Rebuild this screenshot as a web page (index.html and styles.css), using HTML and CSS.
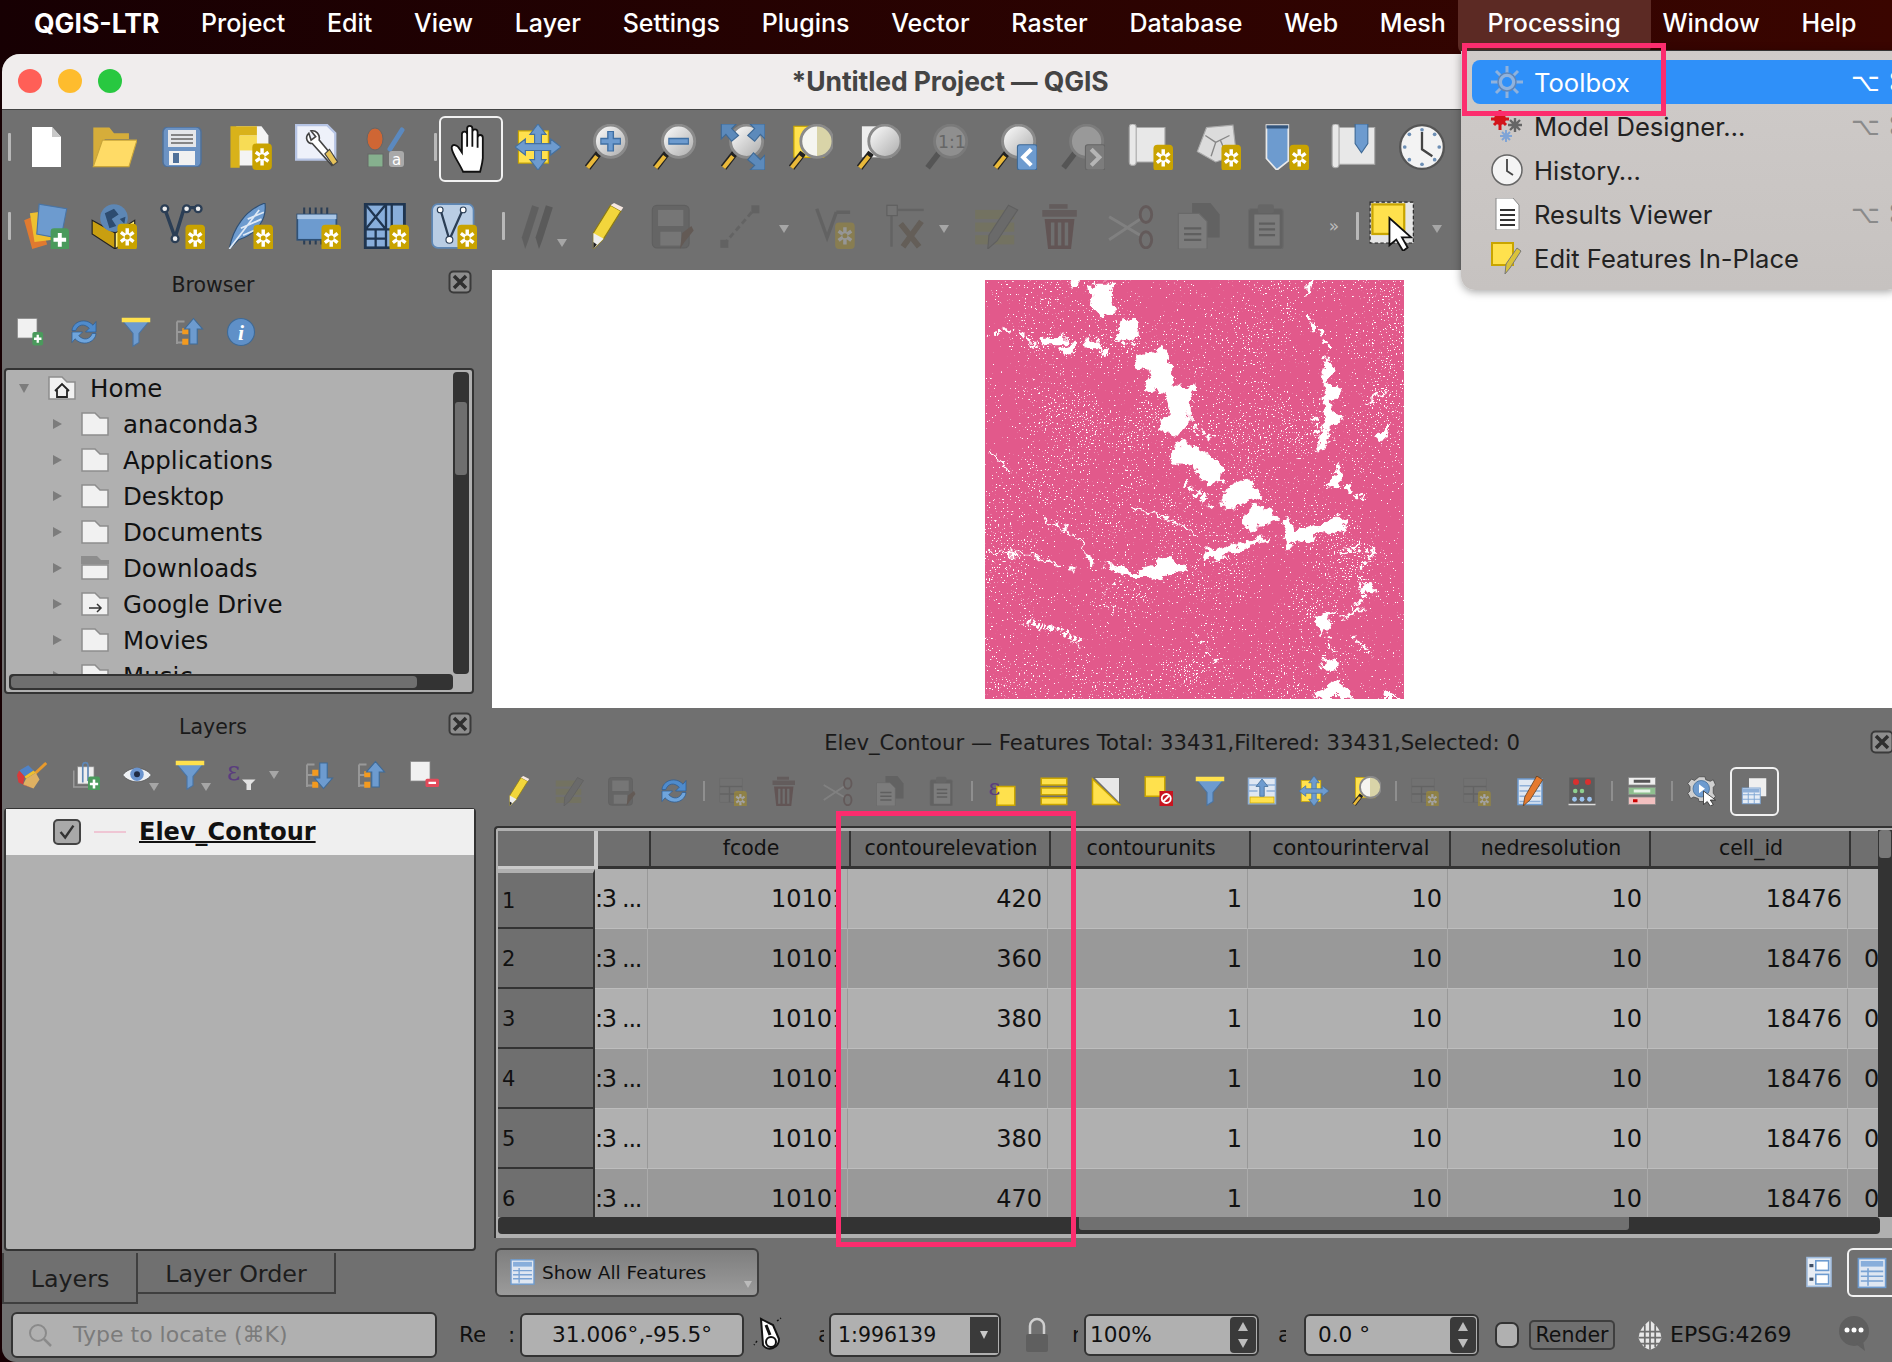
FILE: index.html
```html
<!DOCTYPE html>
<html lang="en">
<head>
<meta charset="utf-8">
<title>QGIS</title>
<link rel="stylesheet" href="styles.css">
</head>
<body>
<svg class="sprite" xmlns="http://www.w3.org/2000/svg">
<defs>
<linearGradient id="glass" x1="0" y1="0" x2="1" y2="1"><stop offset="0" stop-color="#fff"/><stop offset="1" stop-color="#aaa"/></linearGradient>
<linearGradient id="glassy" x1="0" y1="0" x2="1" y2="0"><stop offset=".5" stop-color="#f5f5f0"/><stop offset=".5" stop-color="#d9d4a8"/></linearGradient>
<filter id="speck" x="0" y="0" width="100%" height="100%"><feTurbulence type="fractalNoise" baseFrequency="0.22" numOctaves="2" seed="7" result="h"/><feTurbulence type="fractalNoise" baseFrequency="0.005" numOctaves="2" seed="11" result="l"/><feComposite in="h" in2="l" operator="arithmetic" k1="0" k2=".82" k3=".18" k4="0" result="s"/><feColorMatrix in="s" values="0 0 0 0 1  0 0 0 0 1  0 0 0 0 1  0 0 0 22 -14.6"/></filter>
<filter id="rough" x="-5%" y="-5%" width="110%" height="110%"><feTurbulence type="fractalNoise" baseFrequency="0.035" numOctaves="4" seed="4" result="n"/><feDisplacementMap in="SourceGraphic" in2="n" scale="46" xChannelSelector="R" yChannelSelector="G"/></filter>
<g id="star"><rect width="17" height="23" rx="3.5" fill="#c9a300"/><path d="M8.5 4V19M3 7.5L14 15.5M14 7.5L3 15.5" stroke="#fff" stroke-width="3"/><circle cx="8.5" cy="11.5" r="2.2" fill="#c9a300"/></g>
<g id="gplus"><rect width="16" height="20" rx="3" fill="#4a9a5c"/><path d="M8 4V16M2.5 10H13.5" stroke="#fff" stroke-width="3.4"/></g>
<g id="lens"><path d="M14 25L4 38" stroke="#222" stroke-width="6"/><path d="M12 28L4 38" stroke="#eab93a" stroke-width="3.6"/><circle cx="24" cy="15" r="14" fill="url(#glass)" stroke="#8a8a8a" stroke-width="2.5"/></g>
<g id="arrows4" fill="#6d9bcf" stroke="#45719f" stroke-width="1"><path d="M20 0L27 9H23V31H27L20 40L13 31H17V9H13Z"/><path d="M0 20L9 13V17H31V13L40 20L31 27V23H9V27Z"/></g>
<symbol id="new" viewBox="0 0 40 40"><path d="M6 0H26L35 10V40H6Z" fill="#fff"/><path d="M26 0L35 10H26Z" fill="#c8c8c8"/></symbol>
<symbol id="open" viewBox="0 0 40 40"><path d="M2 3H16L20 8H33V13H12L6 36H2Z" fill="#d6ad3a"/><path d="M10 14H40L33 37H2Z" fill="#ffdb66" stroke="#c9a53a"/></symbol>
<symbol id="save" viewBox="0 0 40 40"><rect x="1" y="0" width="38" height="40" rx="5" fill="#6c93c4" stroke="#4f7099" stroke-width="1.5"/><rect x="6" y="3" width="28" height="17" fill="#e4e6ea"/><path d="M9 8H31M9 12H31M9 16H31" stroke="#666" stroke-width="1.6"/><rect x="7" y="24" width="26" height="14" fill="#f1f1f1"/><rect x="11" y="26" width="6" height="10" fill="#4f7099"/></symbol>
<symbol id="props" viewBox="0 0 40 40"><path d="M8 2H30L36 10V36H8Z" fill="#f4f4f4"/><path d="M3 2H26V10H11V38H3Z" fill="#d9b21a"/><rect x="11" y="10" width="15" height="13" fill="#f7dc55"/><use href="#star" x="22" y="17"/></symbol>
<symbol id="wrench" viewBox="0 0 40 40"><path d="M1 1H28L35 8V31H1Z" fill="#eef1fa" stroke="#b6c4e4" stroke-width="2"/><path d="M12 8C8 12 11 17 15 17L32 36L36 32L21 14C22 9 18 5 14 6L18 11L14 14Z" fill="#fff" stroke="#444" stroke-width="1.4"/><path d="M26 26L33 36L37 33L30 22Z" fill="#e7c35a" stroke="#444"/></symbol>
<symbol id="style" viewBox="0 0 40 40"><ellipse cx="9" cy="12" rx="8" ry="11" fill="#cf6634" stroke="#666"/><path d="M24 22L36 3" stroke="#5b89bf" stroke-width="5" stroke-linecap="round"/><rect x="2" y="27" width="15" height="13" fill="#86b08e" stroke="#666"/><rect x="23" y="24" width="15" height="16" rx="3" fill="#a9a9a9"/><text x="26" y="38" font-family="DejaVu Sans" font-size="15" fill="#fff">a</text></symbol>
<symbol id="hand" viewBox="0 0 40 44"><path d="M13 42C9 33 3 26 3 21C3 17 8 18 10 22L12 25V9a2.3 2.3 0 0 1 4.6 0V20V4a2.3 2.3 0 0 1 4.6 0V20V7a2.3 2.3 0 0 1 4.6 0V21V12a2.3 2.3 0 0 1 4.6 0V30C30 35 29 38 28 42Z" fill="#fff" stroke="#111" stroke-width="1.6"/></symbol>
<symbol id="pansel" viewBox="0 0 40 40"><rect x="3" y="6" width="26" height="28" fill="#ffe14d" stroke="#c9a500"/><use href="#arrows4"/></symbol>
<symbol id="zin" viewBox="0 0 40 40"><use href="#lens"/><path d="M24 6V24M15 15H33" stroke="#3f6fa3" stroke-width="6"/><path d="M24 7V23M16 15H32" stroke="#6d9bcf" stroke-width="3.6"/></symbol>
<symbol id="zout" viewBox="0 0 40 40"><use href="#lens"/><path d="M15 15H33" stroke="#3f6fa3" stroke-width="6"/><path d="M16 15H32" stroke="#6d9bcf" stroke-width="3.6"/></symbol>
<symbol id="zfull" viewBox="0 0 40 40"><use href="#lens"/><g fill="#5c8abb" stroke="#3f6a96"><path d="M2 0H15L11 4L17 10L11 15L6 9L2 13Z"/><path d="M40 0V13L36 9L31 15L25 10L31 4L27 0Z"/><path d="M40 40H27L31 36L25 31L30 25L36 31L40 27Z"/></g></symbol>
<symbol id="zsel" viewBox="0 0 40 40"><rect x="6" y="2" width="26" height="27" fill="#ffe14d" stroke="#c9a500"/><path d="M14 25L4 38" stroke="#222" stroke-width="6"/><path d="M12 28L4 38" stroke="#eab93a" stroke-width="3.6"/><circle cx="26" cy="15" r="14" fill="url(#glassy)" stroke="#8a8a8a" stroke-width="2.5"/></symbol>
<symbol id="zlayer" viewBox="0 0 40 40"><rect x="6" y="2" width="26" height="27" fill="#eee"/><path d="M14 25L4 38" stroke="#222" stroke-width="6"/><path d="M12 28L4 38" stroke="#eab93a" stroke-width="3.6"/><circle cx="26" cy="15" r="14" fill="url(#glass)" stroke="#8a8a8a" stroke-width="2.5"/></symbol>
<symbol id="znative" viewBox="0 0 40 40"><path d="M14 25L4 38" stroke="#555" stroke-width="5"/><circle cx="24" cy="15" r="14" fill="#8f8f8f" stroke="#7a7a7a" stroke-width="2.5"/><text x="13" y="21" font-family="DejaVu Sans" font-size="15" fill="#666">1:1</text></symbol>
<symbol id="zlast" viewBox="0 0 40 40"><use href="#lens"/><rect x="23" y="18" width="17" height="22" rx="2" fill="#6d9bcf" stroke="#3f6a96"/><path d="M35 22L28 29L35 36" fill="none" stroke="#fff" stroke-width="3.6"/></symbol>
<symbol id="znext" viewBox="0 0 40 40"><path d="M14 25L4 38" stroke="#555" stroke-width="5"/><circle cx="24" cy="15" r="14" fill="#999" stroke="#7c7c7c" stroke-width="2.5"/><rect x="23" y="18" width="17" height="22" rx="2" fill="#7c7c7c" stroke="#666"/><path d="M28 22L35 29L28 36" fill="none" stroke="#b5b5b5" stroke-width="3.6"/></symbol>
<symbol id="mapview" viewBox="0 0 40 40"><path d="M2 3a3 3 0 0 1 6 0V33H33V3H8V33a3 3 0 1 1-6 0Z" fill="#e8e8e8" stroke="#aaa"/><use href="#star" x="23" y="18"/></symbol>
<symbol id="map3d" viewBox="0 0 40 40"><path d="M2 24L10 3L33 1L36 27L18 33Z" fill="#dcdcdc" stroke="#aaa"/><path d="M9 10L18 16L14 28M18 16L30 10M22 14L28 28" fill="none" stroke="#888" stroke-width="1.2"/><use href="#star" x="23" y="18"/></symbol>
<symbol id="bmnew" viewBox="0 0 40 40"><path d="M3 1H22V32L12 40L3 30Z" fill="#6d9bcf" stroke="#e9e9e9" stroke-width="1.5"/><path d="M3 1H22V4H3Z" fill="#33557c"/><use href="#star" x="23" y="18"/></symbol>
<symbol id="bms" viewBox="0 0 40 40"><path d="M1 3a3 3 0 0 1 6 0V35H38V3H7V35a3 3 0 1 1-6 0Z" fill="#e8e8e8" stroke="#aaa"/><path d="M21 0H32V17L26.500 25L21 17Z" fill="#6d9bcf" stroke="#3f6a96"/></symbol>
<symbol id="clock" viewBox="0 0 40 40"><circle cx="20" cy="20" r="19" fill="#f3f3f3" stroke="#555" stroke-width="2"/><path d="M20 7V22L29 28" fill="none" stroke="#444" stroke-width="2"/><g fill="#6d8fb5"><circle cx="20" cy="5" r="1.600"/><circle cx="20" cy="35" r="1.600"/><circle cx="5" cy="20" r="1.600"/><circle cx="35" cy="20" r="1.600"/><circle cx="9" cy="9" r="1.600"/><circle cx="31" cy="9" r="1.600"/><circle cx="9" cy="31" r="1.600"/><circle cx="31" cy="31" r="1.600"/></g></symbol>
<symbol id="layernew" viewBox="0 0 40 40"><path d="M1 15L13 10L21 36L8 40Z" fill="#e07a30"/><path d="M6 9L20 7L26 32L10 34Z" fill="#eec02f"/><path d="M14 1L38 5L33 31L12 27Z" fill="#6d9bcf" stroke="#4a74a3"/><use href="#gplus" x="24" y="22"/></symbol>
<symbol id="gpkg" viewBox="0 0 40 40"><path d="M1 15L21 26V40L1 27Z" fill="#c99f10" stroke="#222"/><path d="M21 26L38 15V28L21 40Z" fill="#fff080" stroke="#222"/><circle cx="20" cy="13" r="12" fill="#5d87b5"/><path d="M12 9L20 5L24 10L18 14L22 20L16 22ZM25 14L30 12L29 18Z" fill="#2d4c70"/><use href="#star" x="23" y="18"/></symbol>
<symbol id="vnew" viewBox="0 0 40 40"><path d="M5 5L14 30L22 4M22 4H34" fill="none" stroke="#2b3e55" stroke-width="3"/><g fill="#eee" stroke="#2b3e55" stroke-width="2"><circle cx="5" cy="5" r="3"/><circle cx="14" cy="31" r="3"/><circle cx="24" cy="5" r="3"/><circle cx="34" cy="5" r="3"/></g><use href="#star" x="23" y="19"/></symbol>
<symbol id="feather" viewBox="0 0 40 40"><path d="M2 40C5 22 16 6 33 0C35 14 26 27 10 32Z" fill="#6d9bcf" stroke="#2f5075"/><path d="M2 40L28 6M14 28L28 22M12 22L30 14M18 14L32 8" stroke="#dfe9f5" stroke-width="1.5"/><use href="#star" x="23" y="19"/></symbol>
<symbol id="chip" viewBox="0 0 40 40"><path d="M8 4V36M13 4V36M18 4V36M23 4V36M28 4V36" stroke="#2b3e55" stroke-width="1.800"/><rect x="2" y="10" width="34" height="22" fill="#6d9bcf" stroke="#2f5075" stroke-width="1.500"/><rect x="2" y="10" width="34" height="4" fill="#a9c6e6"/><use href="#star" x="23" y="19"/></symbol>
<symbol id="mesh" viewBox="0 0 40 40"><rect x="2" y="1" width="34" height="38" fill="#88aedb" stroke="#1f3550" stroke-width="2.500"/><path d="M2 23H36M20 1V39M2 31H20M11 23V39M2 1L20 23M20 1L2 23M25 1V23" stroke="#1f3550" stroke-width="2"/><use href="#star" x="23" y="19"/></symbol>
<symbol id="virt" viewBox="0 0 40 40"><rect x="1" y="1" width="36" height="38" rx="5" fill="#b9cde4" stroke="#5e87b5" stroke-width="1.500"/><path d="M8 5L16 32L28 5" fill="none" stroke="#2b3e55" stroke-width="2"/><g fill="#fff" stroke="#2b3e55"><circle cx="8" cy="6" r="2.500"/><circle cx="16" cy="32" r="3"/><circle cx="28" cy="6" r="2.500"/></g><use href="#star" x="23" y="19"/></symbol>
<symbol id="pens" viewBox="0 0 40 40"><path d="M8 40L5 30L14 2L20 4L11 32Z" fill="#555"/><path d="M20 40L17 30L26 2L32 4L23 32Z" fill="#4c4c4c"/></symbol>
<symbol id="pencil" viewBox="0 0 40 40"><path d="M9 40L9 26L24 2L33 7L18 31Z" fill="#f2d63c" stroke="#8c7b12"/><path d="M24 2L27 0L35 4L33 7Z" fill="#f6e8e0"/><path d="M9 40L9 26L18 31Z" fill="#eee"/><path d="M9 40V34L12 36Z" fill="#222"/></symbol>
<symbol id="saveedit" viewBox="0 0 40 40"><rect x="2" y="2" width="32" height="37" rx="4" fill="#5e5e5e" stroke="#555"/><rect x="7" y="6" width="22" height="14" fill="#7b7b7b"/><rect x="9" y="25" width="18" height="12" fill="#7b7b7b"/><path d="M26 40L28 26L36 20L38 24L30 34Z" fill="#5c4c44"/></symbol>
<symbol id="dline" viewBox="0 0 40 40"><path d="M5 36L32 5" stroke="#5c5c5c" stroke-width="2.500" stroke-dasharray="5 3"/><rect x="2" y="32" width="7" height="7" fill="#595959"/><rect x="29" y="2" width="7" height="7" fill="#595959"/></symbol>
<symbol id="vertex" viewBox="0 0 40 40"><path d="M5 5L14 30L22 8M22 8H34" fill="none" stroke="#5a5a5a" stroke-width="3"/><use href="#star" x="21" y="17" opacity=".45"/></symbol>
<symbol id="tools" viewBox="0 0 40 40"><path d="M10 5V38" stroke="#5a5a5a" stroke-width="2"/><rect x="6" y="2" width="9" height="9" fill="#777" stroke="#555"/><path d="M15 6H38" stroke="#5a5a5a" stroke-width="2"/><path d="M20 38L36 16M34 38L18 18" stroke="#5c5248" stroke-width="5"/></symbol>
<symbol id="tabpen" viewBox="0 0 40 40"><rect x="1" y="6" width="34" height="8" fill="#767458"/><rect x="1" y="17" width="34" height="8" fill="#767458"/><rect x="1" y="28" width="34" height="8" fill="#767458"/><path d="M12 40L13 28L30 2L38 6L20 33Z" fill="#676767" stroke="#555"/></symbol>
<symbol id="trash" viewBox="0 0 40 40"><path d="M2 6H32V12H2Z" fill="#5c4f4f"/><path d="M8 1H24V5H8Z" fill="#5c4f4f"/><path d="M4 14H30L27 40H7Z" fill="#5a4444"/><path d="M11 17V37M17 17V37M23 17V37" stroke="#6f6f6f" stroke-width="3"/></symbol>
<symbol id="scis" viewBox="0 0 40 40"><path d="M1 12L28 28M1 32L28 14" stroke="#8c8c8c" stroke-width="2.500"/><ellipse cx="33" cy="10" rx="5" ry="7" fill="none" stroke="#5c4c4c" stroke-width="2.500"/><ellipse cx="33" cy="32" rx="5" ry="7" fill="none" stroke="#5c4c4c" stroke-width="2.500"/></symbol>
<symbol id="copy" viewBox="0 0 40 40"><path d="M14 0H30L38 10V30H14Z" fill="#595959"/><path d="M2 9H20L27 16V40H2Z" fill="#858585" stroke="#666"/><path d="M7 22H22M7 27H22M7 32H22" stroke="#555" stroke-width="2"/></symbol>
<symbol id="paste" viewBox="0 0 40 40"><rect x="4" y="5" width="30" height="35" rx="2" fill="#595959" stroke="#666"/><rect x="9" y="10" width="22" height="27" fill="#858585"/><rect x="12" y="1" width="14" height="8" rx="2" fill="#606060"/><path d="M13 18H27M13 23H27M13 28H27" stroke="#555" stroke-width="2"/></symbol>
<symbol id="selfeat" viewBox="0 0 44 44"><rect x="1" y="1" width="38" height="36" fill="#e6e6e6" stroke="#222" stroke-dasharray="3 2"/><rect x="3" y="3" width="28" height="26" fill="#ffe14d" stroke="#c9a500" stroke-width="2"/><path d="M18 15V39L24 34L30 44L34 41L29 32H37Z" fill="#fff" stroke="#111" stroke-width="1.600"/></symbol>
<symbol id="addwhite" viewBox="0 0 40 40"><rect x="2" y="2" width="26" height="26" fill="#f1f1f1" stroke="#888"/><use href="#gplus" x="22" y="20" transform="translate(2 2) scale(.9)"/></symbol>
<symbol id="remwhite" viewBox="0 0 40 40"><rect x="2" y="2" width="26" height="26" fill="#f1f1f1" stroke="#888"/><rect x="22" y="25" width="18" height="11" rx="2" fill="#e24a5a"/><rect x="26" y="29" width="10" height="3" fill="#fff"/></symbol>
<symbol id="refresh" viewBox="0 0 40 40"><path d="M4 18C5 6 22 0 32 11L36 6V20H22L27 15C20 8 12 10 9 18Z" fill="#4f8bcc" stroke="#2c5e96"/><path d="M36 22C35 34 18 40 8 29L4 34V20H18L13 25C20 32 28 30 31 22Z" fill="#6fa5dc" stroke="#2c5e96"/></symbol>
<symbol id="filter" viewBox="0 0 40 40"><path d="M2 5L16 22V39L24 34V22L38 5Z" fill="#6d9bcf" stroke="#4a74a3" stroke-width="1.500"/><rect x="1" y="1" width="38" height="6" fill="#ffe14d"/></symbol>
<symbol id="collapse" viewBox="0 0 40 40"><path d="M4 6V36M4 6H14M4 20H14M4 34H14" fill="none" stroke="#999" stroke-width="2.500"/><rect x="11" y="15" width="8" height="8" fill="#f39a1f"/><rect x="11" y="29" width="8" height="8" fill="#f39a1f"/><path d="M26 2L38 16H31V36H21V16H14Z" fill="#6d9bcf" stroke="#3f6a96" stroke-width="1.500"/></symbol>
<symbol id="expand" viewBox="0 0 40 40"><path d="M4 6V36M4 6H14M4 20H14M4 34H14" fill="none" stroke="#999" stroke-width="2.500"/><rect x="11" y="13" width="8" height="8" fill="#f39a1f"/><rect x="11" y="29" width="8" height="8" fill="#f39a1f"/><path d="M26 38L38 24H31V4H21V24H14Z" fill="#6d9bcf" stroke="#3f6a96" stroke-width="1.500"/></symbol>
<symbol id="info" viewBox="0 0 40 40"><circle cx="20" cy="20" r="18" fill="#5f90c8" stroke="#3f6a96" stroke-width="1.500"/><text x="20" y="30" text-anchor="middle" font-family="Liberation Serif" font-style="italic" font-weight="700" font-size="29" fill="#fff">i</text></symbol>
<symbol id="brush" viewBox="0 0 40 40"><path d="M24 18L39 4" stroke="#e89a2c" stroke-width="4"/><path d="M3 14L15 7L22 14L10 22Z" fill="#4f82c6"/><path d="M10 22L22 14L25 17L12 25Z" fill="#eec02f"/><path d="M12 25L25 17L30 26L22 38L8 33Z" fill="#dfb162"/><path d="M3 14L10 22L8 33L22 38L2 30L0 20Z" fill="#d83a3a"/></symbol>
<symbol id="group" viewBox="0 0 40 40"><path d="M5 14V36H24" fill="none" stroke="#9a9a9a" stroke-width="2"/><rect x="10" y="9" width="22" height="23" fill="#eee" stroke="#888"/><path d="M17 30V7a3 3 0 0 1 7 0V28" fill="none" stroke="#5e87b5" stroke-width="2.200"/><use href="#gplus" x="24" y="22"/></symbol>
<symbol id="eye" viewBox="0 0 40 40"><path d="M1 20C10 8 30 8 39 20C30 32 10 32 1 20Z" fill="#eef1f5" stroke="#555"/><circle cx="20" cy="19" r="9" fill="#6a94cf"/><circle cx="20" cy="19" r="4" fill="#1f2b44"/></symbol>
<symbol id="eps" viewBox="0 0 40 40"><text x="0" y="26" font-family="DejaVu Serif" font-size="34" fill="#5a3d7e">ε</text><path d="M20 26H38L32 32V40H26V32Z" fill="#e2e2e2"/></symbol>
<symbol id="tabnew" viewBox="0 0 40 40"><rect x="1" y="3" width="30" height="32" fill="#737373" stroke="#666"/><path d="M1 14H31M1 24H31M14 14V35" stroke="#5c5c5c" stroke-width="2"/><use href="#star" x="20" y="20" opacity=".6"/></symbol>
<symbol id="epssel" viewBox="0 0 40 40"><rect x="13" y="14" width="24" height="25" fill="#ffe14d" stroke="#c9a500" stroke-width="2"/><text x="2" y="25" font-family="DejaVu Serif" font-size="30" fill="#5a3d7e">ε</text></symbol>
<symbol id="selall" viewBox="0 0 40 40"><rect x="3" y="3" width="34" height="9" fill="#ffe14d" stroke="#c9a500" stroke-width="2"/><rect x="3" y="16" width="34" height="9" fill="#ffe14d" stroke="#c9a500" stroke-width="2"/><rect x="3" y="29" width="34" height="9" fill="#ffe14d" stroke="#c9a500" stroke-width="2"/></symbol>
<symbol id="invert" viewBox="0 0 40 40"><path d="M2 4L38 38H2Z" fill="#ffe14d" stroke="#c9a500" stroke-width="2"/><path d="M4 2H38V36Z" fill="#e8e8e8" stroke="#555"/></symbol>
<symbol id="desel" viewBox="0 0 40 40"><rect x="3" y="1" width="26" height="26" fill="#ffe14d" stroke="#c9a500" stroke-width="2"/><rect x="22" y="20" width="18" height="20" fill="#c8141f"/><circle cx="31" cy="30" r="6" fill="none" stroke="#fff" stroke-width="2.500"/><path d="M27 34L35 26" stroke="#fff" stroke-width="2.500"/></symbol>
<symbol id="movesel" viewBox="0 0 40 40"><rect x="2" y="3" width="36" height="34" fill="#dfe7f2" stroke="#8fb0d8" stroke-width="2"/><path d="M2 12H38M2 20H14M26 20H38" stroke="#8fb0d8" stroke-width="2"/><rect x="4" y="28" width="32" height="8" fill="#ffe14d" stroke="#c9a500"/><path d="M20 4L28 14H23V27H17V14H12Z" fill="#6d9bcf" stroke="#3f6a96"/></symbol>
<symbol id="calc" viewBox="0 0 40 40"><rect x="4" y="4" width="32" height="34" fill="#dfe7f2" stroke="#6d9bcf" stroke-width="2"/><path d="M6 13H34M6 20H34M6 27H34M6 34H34" stroke="#8fb0d8" stroke-width="2"/><path d="M11 40L13 28L29 0L37 5L20 32Z" fill="#e57a2e" stroke="#5c3a1a"/></symbol>
<symbol id="abacus" viewBox="0 0 40 40"><rect x="3" y="2" width="34" height="36" fill="#5c5c5c"/><path d="M2 38H38" stroke="#ddd" stroke-width="2"/><g fill="#d9302f"><circle cx="12" cy="8" r="4"/><circle cx="28" cy="8" r="4"/></g><g fill="#8fd08f"><circle cx="11" cy="20" r="3"/><circle cx="20" cy="20" r="3"/></g><g fill="#9cc3ee"><circle cx="10" cy="31" r="3.200"/><circle cx="20" cy="31" r="3.200"/><circle cx="30" cy="31" r="3.200"/></g></symbol>
<symbol id="cond" viewBox="0 0 40 40"><rect x="2" y="2" width="36" height="10" fill="#eee" stroke="#888"/><rect x="9" y="5" width="22" height="4" fill="#555"/><rect x="2" y="15" width="36" height="10" fill="#8fbf8f" stroke="#888"/><rect x="9" y="18" width="22" height="4" fill="#e8f3e8"/><rect x="2" y="28" width="36" height="10" fill="#f2c0c0" stroke="#888"/><rect x="8" y="31" width="6" height="4" fill="#c00"/></symbol>
<symbol id="gear" viewBox="0 0 40 40"><path d="M16 1H24L25 5L31 7L35 5L38 12L35 15V23L38 27L33 33L29 31L24 34H16L15 30L9 28L5 30L1 23L4 20V14L1 10L6 4L10 6Z" fill="#cfcfcf" stroke="#444"/><circle cx="19" cy="17" r="11" fill="#6d9bcf" stroke="#3f6a96"/><path d="M16 11L24 17L16 23Z" fill="#fff"/><path d="M22 20V38L27 34L31 40L35 38L31 32H38Z" fill="#fff" stroke="#222"/></symbol>
<symbol id="dock" viewBox="0 0 40 40"><rect x="12" y="3" width="23" height="24" fill="#efefef"/><rect x="3" y="16" width="24" height="21" fill="#e6edf6" stroke="#7aa3d3" stroke-width="1.200"/><path d="M3 25H27M3 31H27M11 22V37M19 22V37" stroke="#7aa3d3" stroke-width="1.200"/><rect x="4" y="17" width="22" height="5" fill="#8fb0d8"/></symbol>
<symbol id="tabview" viewBox="0 0 40 40"><rect x="3" y="2" width="34" height="36" fill="#dfe7f2" stroke="#6d9bcf" stroke-width="2"/><rect x="6" y="5" width="28" height="7" fill="#88aedb"/><path d="M6 18H34M6 24H34M6 30H34M15 14V36" stroke="#7aa3d3" stroke-width="2"/></symbol>
<symbol id="formview" viewBox="0 0 40 40"><rect x="5" y="2" width="30" height="36" fill="#e8edf4" stroke="#9fbbdd" stroke-width="2"/><rect x="16" y="6" width="16" height="12" fill="#fff" stroke="#6d9bcf" stroke-width="2"/><rect x="16" y="23" width="16" height="12" fill="#fff" stroke="#6d9bcf" stroke-width="2"/><rect x="8" y="10" width="5" height="4" fill="#3f4f66"/><rect x="8" y="27" width="5" height="4" fill="#3f4f66"/></symbol>
<symbol id="folder" viewBox="0 0 28 24"><path d="M1 1H14L19 6H27V23H1Z" fill="#f1f1f1" stroke="#8d8d8d" stroke-width="1.500"/></symbol>
<symbol id="folderdl" viewBox="0 0 28 24"><path d="M1 9H27V23H1Z" fill="#f1f1f1" stroke="#8d8d8d" stroke-width="1.500"/><path d="M0 0H16L20 4H28V8H0Z" fill="#8d8d8d"/></symbol>
<symbol id="folderln" viewBox="0 0 28 24"><path d="M1 1H14L19 6H27V23H1Z" fill="#f1f1f1" stroke="#8d8d8d" stroke-width="1.500"/><path d="M8 16H20M16 12L20 16L16 20" fill="none" stroke="#333" stroke-width="1.500"/></symbol>
<symbol id="home" viewBox="0 0 28 24"><path d="M1 1H14L19 6H27V23H1Z" fill="#f1f1f1" stroke="#8d8d8d" stroke-width="1.500"/><path d="M7 15L14 8L21 15M9 14V21H19V14" fill="none" stroke="#222" stroke-width="1.800"/></symbol>
<symbol id="close" viewBox="0 0 24 24"><rect x="1.500" y="1.500" width="21" height="21" rx="4" fill="#8d8d8d" stroke="#3a3a3a" stroke-width="2"/><path d="M6 6L18 18M18 6L6 18" stroke="#2f2f2f" stroke-width="3.500"/></symbol>
<symbol id="search" viewBox="0 0 24 24"><circle cx="10" cy="10" r="8" fill="none" stroke="#8a8a8a" stroke-width="2"/><path d="M16 16L23 23" stroke="#8a8a8a" stroke-width="2.500"/></symbol>
<symbol id="mouse" viewBox="0 0 32 36"><path d="M8 2L20 8L26 22C26 31 15 35 10 28Z" fill="#fff" stroke="#111" stroke-width="2"/><circle cx="18" cy="25" r="5" fill="#fff" stroke="#111" stroke-width="2"/><path d="M13 8L17 18" stroke="#111" stroke-width="3"/><path d="M24 4L28 1M4 24L1 28" stroke="#111" stroke-width="1.500" stroke-dasharray="2 2"/></symbol>
<symbol id="lock" viewBox="0 0 24 36"><path d="M5 18V9a7 7 0 0 1 14 0V18" fill="none" stroke="#cfcfcf" stroke-width="2.500"/><rect x="1" y="17" width="22" height="18" rx="2" fill="#5f5f5f"/></symbol>
<symbol id="globe" viewBox="0 0 30 36"><path d="M15 1C6 8 2 14 2 22C5 30 10 34 15 35C20 34 25 30 28 22C28 14 24 8 15 1Z" fill="#e8e8e8"/><path d="M2 14H28M2 21H28M4 28H26M9 6V32M15 1V35M21 6V32" stroke="#6f6f6f" stroke-width="2"/></symbol>
<symbol id="bubble" viewBox="0 0 32 40"><circle cx="16" cy="16" r="15" fill="#5f5f5f"/><path d="M18 29L27 36L25 26Z" fill="#5f5f5f"/><circle cx="9" cy="15" r="2.500" fill="#fff"/><circle cx="16" cy="15" r="2.500" fill="#fff"/><circle cx="23" cy="15" r="2.500" fill="#fff"/></symbol>
<symbol id="m-gear" viewBox="0 0 32 32"><path d="M16 0V32M0 16H32M5 5L27 27M27 5L5 27" stroke="#8fb2dd" stroke-width="3"/><circle cx="16" cy="16" r="9" fill="#8fb2dd" stroke="#5f86b8" stroke-width="1.500"/><circle cx="16" cy="16" r="5" fill="#2f90f9"/></symbol>
<symbol id="m-model" viewBox="0 0 32 32"><path d="M9 0V20M0 9H18M3 3L15 15M15 3L3 15" stroke="#d3131a" stroke-width="3"/><circle cx="9" cy="9" r="6" fill="#d3131a"/><path d="M24 8V22M17 15H31M19 10L29 20M29 10L19 20" stroke="#666" stroke-width="2.400"/><circle cx="24" cy="15" r="3.500" fill="#666"/><path d="M15 20V32M9 26H21M11 22L19 30M19 22L11 30" stroke="#7fa4d6" stroke-width="2"/></symbol>
<symbol id="m-clock" viewBox="0 0 32 32"><circle cx="16" cy="16" r="15" fill="#f4f4f4" stroke="#666" stroke-width="1.500"/><path d="M16 5V17L22 21" fill="none" stroke="#444" stroke-width="1.800"/></symbol>
<symbol id="m-doc" viewBox="0 0 32 32"><path d="M5 0H22L28 7V32H5Z" fill="#fff" stroke="#888"/><path d="M9 12H24M9 17H24M9 22H24M9 27H24" stroke="#333" stroke-width="1.800"/></symbol>
<symbol id="m-edit" viewBox="0 0 32 32"><rect x="1" y="1" width="21" height="22" fill="#ffe14d" stroke="#c9a500" stroke-width="2"/><path d="M14 32L15 22L26 6L30 9L19 26Z" fill="#d9c23a" stroke="#777"/></symbol>
</defs>
</svg>

<header class="menubar">
  <span class="mi mi-app">QGIS-LTR</span><span class="mi">Project</span><span class="mi">Edit</span><span class="mi">View</span><span class="mi">Layer</span><span class="mi">Settings</span><span class="mi">Plugins</span><span class="mi">Vector</span><span class="mi">Raster</span><span class="mi">Database</span><span class="mi">Web</span><span class="mi">Mesh</span><span class="mi mi-open">Processing</span><span class="mi">Window</span><span class="mi">Help</span>
</header>

<div class="window">
  <div class="titlebar">
    <div class="lights"><i class="light red"></i><i class="light yellow"></i><i class="light green"></i></div>
    <span class="title">*Untitled Project — QGIS</span>
  </div>

  <div class="toolbars">
    <div class="tbrow">
      <i class="handle"></i>
      <span class="tb"><svg class="ic ic40"><use href="#new"/></svg></span>
      <span class="tb"><svg class="ic"><use href="#open"/></svg></span>
      <span class="tb"><svg class="ic ic40"><use href="#save"/></svg></span>
      <span class="tb"><svg class="ic"><use href="#props"/></svg></span>
      <span class="tb"><svg class="ic"><use href="#wrench"/></svg></span>
      <span class="tb"><svg class="ic ic40"><use href="#style"/></svg></span>
      <i class="handle hsep"></i>
      <span class="tb tb-on"><svg class="ic ic-hand"><use href="#hand"/></svg></span>
      <span class="tb"><svg class="ic"><use href="#pansel"/></svg></span>
      <span class="tb"><svg class="ic"><use href="#zin"/></svg></span>
      <span class="tb"><svg class="ic"><use href="#zout"/></svg></span>
      <span class="tb"><svg class="ic"><use href="#zfull"/></svg></span>
      <span class="tb"><svg class="ic"><use href="#zsel"/></svg></span>
      <span class="tb"><svg class="ic"><use href="#zlayer"/></svg></span>
      <span class="tb"><svg class="ic"><use href="#znative"/></svg></span>
      <span class="tb"><svg class="ic"><use href="#zlast"/></svg></span>
      <span class="tb"><svg class="ic"><use href="#znext"/></svg></span>
      <span class="tb"><svg class="ic"><use href="#mapview"/></svg></span>
      <span class="tb"><svg class="ic"><use href="#map3d"/></svg></span>
      <span class="tb"><svg class="ic"><use href="#bmnew"/></svg></span>
      <span class="tb"><svg class="ic"><use href="#bms"/></svg></span>
      <span class="tb"><svg class="ic"><use href="#clock"/></svg></span>
    </div>
    <div class="tbrow">
      <i class="handle"></i>
      <span class="tb"><svg class="ic"><use href="#layernew"/></svg></span>
      <span class="tb"><svg class="ic"><use href="#gpkg"/></svg></span>
      <span class="tb"><svg class="ic"><use href="#vnew"/></svg></span>
      <span class="tb"><svg class="ic"><use href="#feather"/></svg></span>
      <span class="tb"><svg class="ic"><use href="#chip"/></svg></span>
      <span class="tb"><svg class="ic"><use href="#mesh"/></svg></span>
      <span class="tb"><svg class="ic"><use href="#virt"/></svg></span>
      <i class="handle hsep"></i>
      <span class="tb tb-dd"><svg class="ic off"><use href="#pens"/></svg></span>
      <span class="tb tb-nudge1"><svg class="ic"><use href="#pencil"/></svg></span>
      <span class="tb tb-nudge1"><svg class="ic off"><use href="#saveedit"/></svg></span>
      <span class="tb"><svg class="ic off"><use href="#dline"/></svg></span>
      <i class="dd dd-a"></i>
      <span class="tb"><svg class="ic off"><use href="#vertex"/></svg></span>
      <span class="tb tb-nudge1b"><svg class="ic off"><use href="#tools"/></svg></span>
      <i class="dd dd-b"></i>
      <span class="tb tb-nudge9"><svg class="ic off"><use href="#tabpen"/></svg></span>
      <span class="tb tb-nudge2"><svg class="ic off"><use href="#trash"/></svg></span>
      <span class="tb"><svg class="ic off"><use href="#scis"/></svg></span>
      <span class="tb"><svg class="ic off"><use href="#copy"/></svg></span>
      <span class="tb"><svg class="ic off"><use href="#paste"/></svg></span>
      <span class="more">»</span>
      <i class="handle hsep2"></i>
      <span class="tb"><svg class="ic ic-sel"><use href="#selfeat"/></svg></span>
      <i class="dd dd-c"></i>
    </div>
  </div>

  <div class="workspace">
    <aside class="leftdock">
      <div class="docktitle"><span>Browser</span><svg class="closebtn"><use href="#close"/></svg></div>
      <div class="ptools">
        <span class="pt"><svg class="is"><use href="#addwhite"/></svg></span>
        <span class="pt"><svg class="is"><use href="#refresh"/></svg></span>
        <span class="pt"><svg class="is"><use href="#filter"/></svg></span>
        <span class="pt"><svg class="is"><use href="#collapse"/></svg></span>
        <span class="pt"><svg class="is"><use href="#info"/></svg></span>
      </div>
      <div class="tree">
        <div class="tree-area">
          <div class="tree-list">
            <div class="node"><i class="tri tri-down"></i><svg class="fico"><use href="#home"/></svg><span>Home</span></div>
            <div class="node child"><i class="tri"></i><svg class="fico"><use href="#folder"/></svg><span>anaconda3</span></div>
            <div class="node child"><i class="tri"></i><svg class="fico"><use href="#folder"/></svg><span>Applications</span></div>
            <div class="node child"><i class="tri"></i><svg class="fico"><use href="#folder"/></svg><span>Desktop</span></div>
            <div class="node child"><i class="tri"></i><svg class="fico"><use href="#folder"/></svg><span>Documents</span></div>
            <div class="node child"><i class="tri"></i><svg class="fico"><use href="#folderdl"/></svg><span>Downloads</span></div>
            <div class="node child"><i class="tri"></i><svg class="fico"><use href="#folderln"/></svg><span>Google Drive</span></div>
            <div class="node child"><i class="tri"></i><svg class="fico"><use href="#folder"/></svg><span>Movies</span></div>
            <div class="node child"><i class="tri"></i><svg class="fico"><use href="#folder"/></svg><span>Music</span></div>
          </div>
          <div class="tree-v"><i class="tree-vthumb"></i></div>
        </div>
        <div class="tree-h"><i class="tree-hthumb"></i></div>
      </div>
      <div class="docktitle docktitle-2"><span>Layers</span><svg class="closebtn"><use href="#close"/></svg></div>
      <div class="ptools ptools-2">
        <span class="pt"><svg class="is"><use href="#brush"/></svg></span>
        <span class="pt"><svg class="is"><use href="#group"/></svg></span>
        <span class="pt pt-dd"><svg class="is"><use href="#eye"/></svg></span>
        <span class="pt pt-dd"><svg class="is"><use href="#filter"/></svg></span>
        <span class="pt"><svg class="is"><use href="#eps"/></svg></span>
        <i class="dd dd-eps"></i>
        <span class="pt"><svg class="is"><use href="#expand"/></svg></span>
        <span class="pt"><svg class="is"><use href="#collapse"/></svg></span>
        <span class="pt"><svg class="is"><use href="#remwhite"/></svg></span>
      </div>
      <div class="layerlist">
        <div class="layerrow">
          <span class="check"><svg viewBox="0 0 24 24" class="checkmark"><path d="M5 12L10 18L19 5" fill="none" stroke="#333" stroke-width="2.600"/></svg></span>
          <i class="symline"></i>
          <span class="layername">Elev_Contour</span>
        </div>
      </div>
      <div class="tabs"><span class="tab tab-on">Layers</span><span class="tab">Layer Order</span></div>
    </aside>

    <main class="rightarea">
      <div class="canvas">
        <svg class="mapsvg" viewBox="75 57 1258 1258" xmlns="http://www.w3.org/2000/svg">
          <rect x="75" y="57" width="1258" height="1258" fill="#e2598b"/>
          <rect x="75" y="57" width="1258" height="1258" filter="url(#speck)"/>
          <g filter="url(#rough)">
            <g fill="#fff">
              <circle cx="349" cy="67" r="14"/>
              <path d="M385 90L410 65L470 65L450 100L470 150L430 172L400 150Z"/>
              <path d="M485 170L525 180L535 220L510 255L470 230Z"/>
              <path d="M240 235L330 228L320 250L250 250Z"/><path d="M300 265L345 250L345 280L320 285Z"/><path d="M370 228L420 240L415 270L375 272Z"/><path d="M420 268L445 270L440 285L418 280Z"/>
              <path d="M535 280L610 258L640 320L640 370L705 378L690 420L690 480L655 522L590 505L630 460L610 400L550 382L580 340L535 320Z"/>
              <path d="M630 590L660 540L720 562L780 600L795 660L740 668L700 610L650 612Z"/>
              <path d="M790 690L870 650L905 710L850 730L800 750Z"/>
              <path d="M840 770L890 730L965 775L900 800L860 810Z"/>
              <path d="M968 820L985 758L1005 808L1100 785L1170 765L1150 810L1060 830L990 858Z"/>
              <path d="M800 860L940 823L930 840L860 860L810 880L730 905L740 855L760 870Z"/>
              <path d="M430 908L470 912L520 938L580 910L635 885L680 930L620 945L570 955L510 955L470 935Z"/>
              <path d="M1100 680L1135 600L1148 672Z"/>
              <path d="M1100 285L1130 330L1100 365L1145 390L1110 430L1140 480L1100 510L1115 540L1080 570L1075 545L1095 500L1095 440L1095 370L1085 340Z"/>
              <path d="M1060 1075L1130 1045L1100 1110L1085 1120Z"/><path d="M1140 1075L1225 1035L1190 1062L1145 1078Z"/>
              <path d="M1090 1190L1140 1210L1130 1240L1085 1225Z"/><path d="M1060 1310L1140 1255L1190 1315Z"/><path d="M1270 1295L1333 1315H1265Z"/>
              <path d="M1195 990L1240 950L1250 995Z"/><path d="M1240 525L1300 490L1260 545Z"/><path d="M1040 60H1060L1040 115Z"/><path d="M330 925L345 920L335 940Z"/><path d="M380 890L400 895L395 920Z"/>
            </g>
            <g fill="none" stroke="#fff" stroke-width="5">
              <path d="M250 770L300 795L345 822L380 880L395 915"/>
              <path d="M85 870L135 880L220 882L290 915"/><path d="M90 575L150 630"/><path d="M510 735L640 780L715 830"/><path d="M1210 440L1280 390"/>
              <path d="M200 1085L300 1110L360 1150" stroke-width="14" stroke-dasharray="10 8"/>
              <path d="M180 215L240 270M90 220L160 210" stroke-width="10" stroke-dasharray="12 9"/>
              <path d="M1040 170L1110 250L1100 290M1060 470L1090 540M1160 680L1210 720" stroke-width="14" stroke-dasharray="16 12"/>
              <path d="M700 1120L790 1220L835 1285" stroke-dasharray="10 24"/>
              <path d="M700 500L760 540M670 660L760 740" stroke-width="16" stroke-dasharray="14 11"/>
              <path d="M1150 880L1190 860L1240 880L1200 930" stroke-width="16" stroke-dasharray="9 9"/>
              <path d="M1190 950L1215 1010L1180 1050M1100 1130L1130 1180M1180 1130L1240 1190" stroke-width="10" stroke-dasharray="11 10"/>
              <path d="M480 960L420 1000M430 1030L470 1050" stroke-width="8" stroke-dasharray="9 9"/>
            </g>
          </g>
        </svg>
      </div>
      <div class="attrtitle"><span>Elev_Contour — Features Total: 33431,Filtered: 33431,Selected: 0</span><svg class="closebtn closebtn-r"><use href="#close"/></svg></div>
      <div class="attrtools">
        <span class="at"><svg class="is"><use href="#pencil"/></svg></span>
        <span class="at"><svg class="is off"><use href="#tabpen"/></svg></span>
        <span class="at"><svg class="is off"><use href="#saveedit"/></svg></span>
        <span class="at"><svg class="is"><use href="#refresh"/></svg></span>
        <i class="asep"></i>
        <span class="at"><svg class="is off"><use href="#tabnew"/></svg></span>
        <span class="at"><svg class="is off"><use href="#trash"/></svg></span>
        <span class="at"><svg class="is off"><use href="#scis"/></svg></span>
        <span class="at"><svg class="is off"><use href="#copy"/></svg></span>
        <span class="at"><svg class="is off"><use href="#paste"/></svg></span>
        <i class="asep"></i>
        <span class="at"><svg class="is"><use href="#epssel"/></svg></span>
        <span class="at"><svg class="is"><use href="#selall"/></svg></span>
        <span class="at"><svg class="is"><use href="#invert"/></svg></span>
        <span class="at"><svg class="is"><use href="#desel"/></svg></span>
        <span class="at"><svg class="is"><use href="#filter"/></svg></span>
        <span class="at"><svg class="is"><use href="#movesel"/></svg></span>
        <span class="at"><svg class="is"><use href="#pansel"/></svg></span>
        <span class="at"><svg class="is"><use href="#zsel"/></svg></span>
        <i class="asep"></i>
        <span class="at"><svg class="is off"><use href="#tabnew"/></svg></span>
        <span class="at"><svg class="is off"><use href="#tabnew"/></svg></span>
        <span class="at"><svg class="is"><use href="#calc"/></svg></span>
        <span class="at"><svg class="is"><use href="#abacus"/></svg></span>
        <i class="asep"></i>
        <span class="at"><svg class="is"><use href="#cond"/></svg></span>
        <i class="asep"></i>
        <span class="at"><svg class="is"><use href="#gear"/></svg></span>
        <span class="at at-on"><svg class="is"><use href="#dock"/></svg></span>
      </div>
      <div class="table">
        <div class="table-top">
          <div class="table-main">
            <div class="thead">
              <span class="corner"></span><span class="th th-0"></span><span class="th">fcode</span><span class="th">contourelevation</span><span class="th">contourunits</span><span class="th">contourinterval</span><span class="th">nedresolution</span><span class="th">cell_id</span><span class="th th-last"></span>
            </div>
            <div class="tr"><span class="rh">1</span><span class="td td-0">:3 ...</span><span class="td"><b class="clip">10101</b></span><span class="td">420</span><span class="td">1</span><span class="td">10</span><span class="td">10</span><span class="td">18476</span><span class="td td-last"></span></div>
            <div class="tr tr-alt"><span class="rh">2</span><span class="td td-0">:3 ...</span><span class="td"><b class="clip">10101</b></span><span class="td">360</span><span class="td">1</span><span class="td">10</span><span class="td">10</span><span class="td">18476</span><span class="td td-last">0</span></div>
            <div class="tr"><span class="rh">3</span><span class="td td-0">:3 ...</span><span class="td"><b class="clip">10101</b></span><span class="td">380</span><span class="td">1</span><span class="td">10</span><span class="td">10</span><span class="td">18476</span><span class="td td-last">0</span></div>
            <div class="tr tr-alt"><span class="rh">4</span><span class="td td-0">:3 ...</span><span class="td"><b class="clip">10101</b></span><span class="td">410</span><span class="td">1</span><span class="td">10</span><span class="td">10</span><span class="td">18476</span><span class="td td-last">0</span></div>
            <div class="tr"><span class="rh">5</span><span class="td td-0">:3 ...</span><span class="td"><b class="clip">10101</b></span><span class="td">380</span><span class="td">1</span><span class="td">10</span><span class="td">10</span><span class="td">18476</span><span class="td td-last">0</span></div>
            <div class="tr tr-alt"><span class="rh">6</span><span class="td td-0">:3 ...</span><span class="td"><b class="clip">10101</b></span><span class="td">470</span><span class="td">1</span><span class="td">10</span><span class="td">10</span><span class="td">18476</span><span class="td td-last">0</span></div>
          </div>
          <div class="table-v"><i class="table-vthumb"></i></div>
        </div>
        <div class="table-h"><i class="table-hthumb"></i></div>
      </div>
      <div class="attrbottom">
        <button class="showall"><svg class="showall-ic"><use href="#tabview"/></svg><span>Show All Features</span><i class="showall-dd"></i></button>
        <div class="viewbtns">
          <svg class="viewic"><use href="#formview"/></svg>
          <span class="viewon"><svg class="viewic"><use href="#tabview"/></svg></span>
        </div>
      </div>
    </main>
  </div>

  <footer class="statusbar">
    <div class="locator"><svg class="searchic"><use href="#search"/></svg><span>Type to locate (⌘K)</span></div>
    <span class="lbl lbl-re">Re</span>
    <span class="lbl lbl-c">:</span>
    <div class="field field-coord">31.006°,-95.5°</div>
    <svg class="mouseic"><use href="#mouse"/></svg>
    <span class="lbl lbl-a">a</span>
    <div class="field field-scale"><span>1:996139</span><i class="combo"><i class="combo-tri"></i></i></div>
    <svg class="lockic"><use href="#lock"/></svg>
    <span class="lbl lbl-r">r</span>
    <div class="field field-mag"><span>100%</span><i class="spin"></i></div>
    <span class="lbl lbl-a2">a</span>
    <div class="field field-rot"><span>0.0 °</span><i class="spin"></i></div>
    <i class="rendercheck"></i>
    <span class="renderlbl">Render</span>
    <svg class="globeic"><use href="#globe"/></svg>
    <span class="epsg">EPSG:4269</span>
    <svg class="bubbleic"><use href="#bubble"/></svg>
  </footer>
</div>

<nav class="dropdown">
  <div class="dmi dmi-on"><svg class="dic"><use href="#m-gear"/></svg><span>Toolbox</span><kbd class="short">⌥ ⌘</kbd></div>
  <div class="dmi"><svg class="dic"><use href="#m-model"/></svg><span>Model Designer…</span><kbd class="short">⌥ ⌘</kbd></div>
  <div class="dmi"><svg class="dic"><use href="#m-clock"/></svg><span>History…</span></div>
  <div class="dmi"><svg class="dic"><use href="#m-doc"/></svg><span>Results Viewer</span><kbd class="short">⌥ ⌘</kbd></div>
  <div class="dmi"><svg class="dic"><use href="#m-edit"/></svg><span>Edit Features In-Place</span></div>
</nav>
<i class="frame frame-menu"></i>
<i class="frame frame-col"></i>
</body>
</html>
```

FILE: styles.css
```css
* { box-sizing: border-box; }
html, body { margin: 0; height: 1362px; overflow: hidden; }
body {
  position: relative;
  width: 1892px;
  background: linear-gradient(90deg, #170003, #3a0500);
  font-family: "DejaVu Sans", sans-serif;
  color: #111;
}
i { display: block; font-style: normal; }
.sprite { position: absolute; width: 0; height: 0; }
.off { opacity: .6; }

.menubar { height: 54px; display: flex; align-items: center; padding: 0 0 8px 34px; gap: 41.700px; font: 500 25px "Inter", sans-serif; color: #fff; position: relative; z-index: 0; }
.mi-app { font-weight: 700; font-size: 26.500px; }
.mi-open { position: relative; }
.mi-open::before { content: ""; position: absolute; left: -30px; right: -30px; top: -23px; height: 69px; background: #5c2a24; border-radius: 0 0 8px 8px; z-index: -1; }

.window { width: 1900px; height: 1308px; margin-left: 2px; background: #707070; border-radius: 18px 18px 0 14px; overflow: hidden; display: flex; flex-direction: column; }
.titlebar { height: 56px; background: #f0eded; border-bottom: 1px solid #444; display: flex; align-items: center; justify-content: center; position: relative; }
.lights { position: absolute; left: 16px; top: 15px; display: flex; gap: 16px; }
.light { width: 24px; height: 24px; border-radius: 50%; }
.red { background: #ff5f57; } .yellow { background: #febc2e; } .green { background: #28c840; }
.title { font: 700 26.500px "Inter", sans-serif; color: #444; letter-spacing: -.1px; margin: -2px 4px 0 0; }

.toolbars { height: 160px; display: grid; grid-template-rows: 74px 84px; }
.tbrow { display: flex; align-items: center; padding-left: 6px; }
.handle { width: 3px; height: 28px; background: #b8b8b8; border-radius: 1px; margin-right: 1px; flex: none; }
.hsep { margin-left: 14px; margin-right: 0; }
.hsep2 { margin-left: 7px; }
.tb { width: 68px; flex: none; display: flex; justify-content: center; align-items: center; height: 66px; position: relative; }
.ic { width: 46px; height: 46px; display: block; }
.ic40 { width: 40px; height: 40px; }
.ic-hand { width: 46px; height: 50px; }
.ic-sel { width: 50px; height: 50px; }
.tb-on { border: 2px solid #f2f2f2; border-radius: 6px; width: 64px; margin: 4px 1px 0 2px; }
.tb-nudge1 { margin-left: -1px; } .tb-nudge2 { margin-left: -2px; } .tb-nudge1b { margin-left: 1px; } .tb-nudge9 { margin-left: 9px; }
.dd { width: 0; height: 0; border-left: 5px solid transparent; border-right: 5px solid transparent; border-top: 8px solid #a6a6a6; flex: none; }
.dd-a { margin: 6px 11px 0 4px; }
.dd-b { margin: 6px 5px 0 2px; }
.dd-c { margin: 6px 0 0 4px; }
.dd-eps { margin: 0 14px 0 0; }
.tb-dd::after, .pt-dd::after { content: ""; position: absolute; border-left: 5px solid transparent; border-right: 5px solid transparent; border-top: 8px solid #a6a6a6; }
.tb-dd::after { right: 6px; bottom: 12px; }
.pt-dd::after { right: 5px; bottom: 6px; }
.more { color: #bbb; font-size: 17px; width: 30px; margin-left: 18px; text-align: center; flex: none; }

.workspace { height: 1036px; display: grid; grid-template-columns: 490px 1fr; }
.leftdock { display: flex; flex-direction: column; }
.docktitle { height: 30px; display: flex; align-items: center; justify-content: center; position: relative; font-size: 20.500px; color: #1a1a1a; width: 470px; padding-right: 48px; }
.docktitle-2 { margin-top: 18px; }
.closebtn { position: absolute; width: 24px; height: 24px; right: 0; top: 0; }
.ptools { height: 64px; display: flex; align-items: center; padding-left: 3px; }
.ptools-2 { height: 66px; padding-left: 4px; }
.pt { width: 52.500px; height: 44px; display: flex; align-items: center; justify-content: center; flex: none; position: relative; }
.is { width: 30px; height: 30px; display: block; }

.tree { width: 470px; height: 326px; margin-left: 2px; margin-top: 4px; border: 2px solid #333; border-radius: 4px; background: #b0b0b0; display: flex; flex-direction: column; overflow: hidden; }
.tree-area { height: 304px; display: flex; position: relative; }
.tree-list { flex: 1; overflow: hidden; }
.node { height: 36px; display: flex; align-items: center; font-size: 24.500px; color: #111; white-space: nowrap; }
.tri { width: 0; height: 0; border-top: 5px solid transparent; border-bottom: 5px solid transparent; border-left: 9px solid #7c7c7c; margin-right: 19px; flex: none; }
.tri-down { border-left: 5px solid transparent; border-right: 5px solid transparent; border-top: 9px solid #7c7c7c; border-bottom: 0; margin-left: 13px; margin-right: 19px; }
.fico { width: 28px; height: 24px; margin-right: 14px; flex: none; }
.child .tri { margin-left: 47px; }
.tree-v { width: 16px; margin: 2px 3px 0 0; background: #333; border-radius: 4px; padding: 30px 2px 0; flex: none; }
.tree-vthumb { height: 73px; background: #6f6f6f; border-radius: 3px; }
.tree-h { height: 16px; margin: 0 19px 0 3px; background: #333; border-radius: 4px; padding: 2px; }
.tree-hthumb { width: 406px; height: 12px; background: #6f6f6f; border-radius: 4px; }

.layerlist { width: 472px; height: 443px; margin-left: 2px; background: #b0b0b0; border: 2px solid #333; border-top-width: 1px; border-radius: 4px; }
.layerrow { height: 46px; background: #efefef; display: flex; align-items: center; }
.check { width: 28px; height: 26px; margin-left: 47px; border: 2px solid #444; border-radius: 5px; background: #a9a9a9; flex: none; }
.checkmark { width: 24px; height: 22px; display: block; }
.symline { width: 32px; height: 2px; background: #efc6d4; margin-left: 13px; flex: none; }
.layername { font-weight: 700; font-size: 24px; margin-left: 13px; text-decoration: underline; text-decoration-thickness: 2px; color: #111; }
.tabs { display: flex; align-items: flex-start; margin-top: 2px; }
.tab { height: 41px; width: 198px; flex: none; border: 2px solid #3f3f3f; border-top: 0; border-left: 0; font-size: 23.800px; display: flex; align-items: center; justify-content: center; padding-top: 2px; color: #1d1d1d; }
.tab-on { height: 51px; width: 136px; border-left: 2px solid #3f3f3f; padding-top: 2px; }

.rightarea { display: flex; flex-direction: column; }
.canvas { height: 438px; background: #fff; display: flex; align-items: center; justify-content: center; padding-left: 5px; width: 1400px; flex: none; }
.mapsvg { width: 419px; height: 419px; display: block; }
.attrtitle { height: 58px; padding: 10px 40px 0 0; width: 1400px; display: flex; align-items: center; justify-content: center; position: relative; font-size: 21.200px; color: #1a1a1a; flex: none; }
.closebtn-r { top: 22px; right: -2px; }
.attrtools { height: 50px; display: flex; align-items: center; width: 1400px; flex: none; }
.at { width: 52px; flex: none; height: 49px; display: flex; align-items: center; justify-content: center; }
.at-on { border: 2px solid #f2f2f2; border-radius: 6px; width: 49px; margin-left: 2px; }
.asep { width: 8px; height: 20px; flex: none; position: relative; }
.asep::before { content: ""; position: absolute; left: 3px; top: 0; width: 2px; height: 20px; background: #8f8f8f; }

.table { width: 1400px; height: 412px; margin-top: 10px; margin-left: 2px; border: 2px solid #333; border-bottom: 0; border-right: 0; background: #b0b0b0; border-radius: 4px 0 0 0; display: flex; flex-direction: column; flex: none; }
.table-top { height: 389px; display: flex; overflow: hidden; flex: none; }
.table-main { width: 1382px; overflow: hidden; padding-top: 3px; padding-left: 2px; flex: none; }
.thead { height: 38px; display: flex; }
.corner { width: 100px; background: #6f6f6f; border-right: 4px solid #c9c9c9; border-bottom: 3px solid #c9c9c9; flex: none; }
.th { width: 200px; flex: none; background: #6f6f6f; border-right: 2px solid #333; border-bottom: 3px solid #333; font-size: 20.500px; color: #111; display: flex; align-items: center; justify-content: center; padding: 0 0 2px 2px; }
.th-0 { width: 53px; }
.th-last { width: 30px; border-right: 0; }
.tr { height: 60px; display: flex; background: #b0b0b0; }
.tr-alt { background: #999; }
.rh { width: 97px; flex: none; background: #6f6f6f; border-right: 2px solid #333; border-bottom: 2px solid #333; font-size: 21px; display: flex; align-items: center; padding-left: 4px; padding-top: 2px; }
.tr:nth-child(2) .rh { border-top: 4px solid #b0b0b0; }
.td { width: 200px; flex: none; border-right: 1px solid #999; border-bottom: 1px solid #bdbdbd; font-size: 24px; display: flex; align-items: center; justify-content: flex-end; padding-right: 5px; color: #111; overflow: hidden; white-space: nowrap; }
.tr-alt .td { border-right-color: #aaa; }
.td-0 { width: 53px; justify-content: flex-start; padding: 0; letter-spacing: -1.300px; }
.td .clip { font-weight: 400; width: 70px; overflow: hidden; margin-right: 1px; flex: none; }
.td-last { width: 30px; justify-content: flex-start; padding: 0 0 0 16px; border-right: 0; }
.table-v { width: 14px; background: #333; flex: none; margin-top: 2px; padding: 0 1px; }
.table-vthumb { height: 28px; background: #777; border-radius: 3px; }
.table-h { height: 17px; margin-left: 2px; margin-right: 14px; background: #333; border-radius: 4px; padding: 0 0 4px 581px; flex: none; }
.table-hthumb { width: 550px; height: 13px; background: #707070; border-radius: 0 0 3px 3px; }

.attrbottom { height: 68px; display: flex; align-items: center; width: 1400px; padding: 0 0 0 3px; position: relative; flex: none; }
.showall { width: 264px; height: 49px; border: 2px solid #3f3f3f; border-radius: 6px; background: linear-gradient(#7e7e7e, #9b9b9b); display: flex; align-items: center; padding: 0 0 0 12px; font: 18.500px "DejaVu Sans", sans-serif; color: #111; position: relative; }
.showall-ic { width: 27px; height: 30px; margin-right: 6px; }
.showall-dd { position: absolute; right: 5px; bottom: 7px; border-left: 4px solid transparent; border-right: 4px solid transparent; border-top: 7px solid #bbb; }
.viewbtns { margin-left: auto; display: flex; align-items: center; }
.viewic { width: 32px; height: 32px; display: block; }
.viewon { width: 60px; height: 49px; border: 2px solid #f2f2f2; border-radius: 6px; padding: 7px 0 0 7px; margin: 0 -15px 0 12px; }

.statusbar { height: 56px; display: flex; align-items: center; font-size: 21.600px; color: #111; padding-top: 1px; }
.locator { width: 426px; height: 46px; margin-left: 9px; background: #b0b0b0; border: 2px solid #333; border-radius: 6px; display: flex; align-items: center; padding-left: 15px; color: #7b7b7b; font-size: 22px; flex: none; }
.searchic { width: 24px; height: 26px; margin-right: 21px; flex: none; }
.lbl { flex: none; overflow: hidden; }
.lbl-re { margin-left: 22px; width: 26px; }
.lbl-c { margin-left: 23px; width: 6px; }
.field { height: 44px; flex: none; background: #b0b0b0; border: 2px solid #333; border-radius: 6px; display: flex; align-items: center; }
.field-coord { width: 224px; margin-left: 6px; justify-content: center; }
.mouseic { width: 32px; height: 36px; margin-left: 9px; flex: none; }
.lbl-a { width: 6px; margin-left: 33px; }
.field-scale { width: 172px; margin-left: 5px; padding-left: 7px; font-size: 20.500px; }
.combo { width: 28px; height: 36px; background: #3a3a3a; margin-left: auto; margin-right: 1px; display: flex; align-items: center; justify-content: center; }
.combo-tri { border-left: 4px solid transparent; border-right: 4px solid transparent; border-top: 8px solid #c8c8c8; }
.lockic { width: 24px; height: 36px; margin-left: 24px; flex: none; }
.lbl-r { width: 6px; margin-left: 23px; }
.field-mag { width: 175px; height: 42px; margin-left: 6px; padding-left: 4px; }
.spin { width: 26px; height: 36px; margin-left: auto; margin-right: 1px; background: #3a3a3a; border-radius: 4px; position: relative; }
.spin::before { content: ""; position: absolute; left: 8px; top: 5px; border-left: 5px solid transparent; border-right: 5px solid transparent; border-bottom: 9px solid #bdbdbd; }
.spin::after { content: ""; position: absolute; left: 8px; bottom: 5px; border-left: 5px solid transparent; border-right: 5px solid transparent; border-top: 9px solid #bdbdbd; }
.lbl-a2 { width: 8px; margin-left: 19px; }
.field-rot { width: 175px; height: 42px; margin-left: 18px; padding-left: 12px; }
.rendercheck { width: 24px; height: 26px; margin-left: 16px; background: #b0b0b0; border: 2px solid #333; border-radius: 7px; flex: none; }
.renderlbl { width: 86px; height: 30px; margin-left: 10px; border: 2px solid #3f3f3f; border-radius: 5px; display: flex; align-items: center; justify-content: center; font-size: 20.500px; flex: none; }
.globeic { width: 26px; height: 32px; margin-left: 22px; flex: none; }
.epsg { margin-left: 7px; width: 132px; white-space: nowrap; flex: none; font-size: 22px; }
.bubbleic { width: 32px; height: 40px; margin-left: 36px; flex: none; }

.dropdown { position: absolute; left: 1461px; top: 50px; width: 440px; height: 240px; background: linear-gradient(#cfcbc9, #c6c2c0); border-radius: 0 0 14px 14px; box-shadow: 0 2px 8px rgba(0, 0, 0, .35); padding-top: 9px; font: 25.600px "Inter", sans-serif; color: #222; border-top: 1px solid #333; }
.dmi { height: 44px; display: flex; align-items: center; padding-left: 30px; position: relative; }
.dmi-on { background: #2f90f9; color: #fff; border-radius: 8px 0 0 8px; margin-left: 11px; padding-left: 19px; }
.dic { width: 32px; height: 32px; margin-right: 11px; flex: none; }
.short { position: absolute; left: 390px; top: 8px; color: #8a8a8a; font: 25px "DejaVu Sans", sans-serif; white-space: nowrap; }
.dmi-on .short { color: #fff; left: 379px; }
.frame { position: absolute; border: 5px solid #fc2d6e; pointer-events: none; }
.frame-menu { left: 1462px; top: 43px; width: 204px; height: 73px; }
.frame-col { left: 836px; top: 811px; width: 240px; height: 436px; }
```
